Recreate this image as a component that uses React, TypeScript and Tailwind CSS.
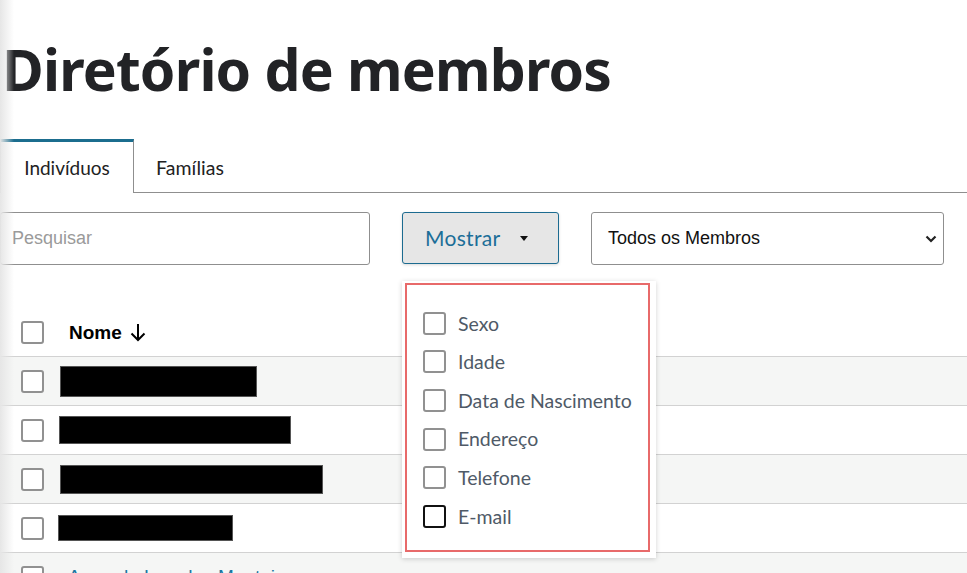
import { useState } from 'react';

const opcoes = ['Sexo', 'Idade', 'Data de Nascimento', 'Endereço', 'Telefone', 'E-mail'];

const linhas = [
  { w: 'w-[197px] h-[31px] ml-[16px]', bg: 'bg-[#f5f6f5]' },
  { w: 'w-[232px] h-[28px] ml-[15px]', bg: 'bg-white' },
  { w: 'w-[263px] h-[29px] ml-[16px]', bg: 'bg-[#f5f6f5]' },
  { w: 'w-[175px] h-[26px] ml-[14px]', bg: 'bg-white' },
];

function Caixa({ ativa = false }: { ativa?: boolean }) {
  return (
    <span
      className={
        ativa
          ? 'block w-[23px] h-[23px] shrink-0 rounded-[3px] border-2 border-[#111] bg-white'
          : 'block w-[23px] h-[23px] shrink-0 rounded-[3px] border-2 border-[#919191] bg-white'
      }
    />
  );
}

export default function App() {
  const [aba, setAba] = useState('ind');

  return (
    <div className="relative min-h-screen overflow-hidden bg-white font-['Liberation_Sans',Arial,sans-serif]">
      <div className="pointer-events-none absolute inset-y-0 left-0 z-20 w-[14px] bg-linear-to-r from-[#e6e6e6] to-transparent" />

      <h1 className="mt-[41px] pl-[2px] font-['Noto_Sans',sans-serif] text-[57px] font-bold leading-none tracking-[-0.8px] text-[#222326]">
        Diretório de membros
      </h1>

      <div className="mt-[41px] flex h-[54px] border-b border-[#8f8f8f] font-['Lato',sans-serif] text-[19px] text-[#222]">
        <button
          onClick={() => setAba('ind')}
          className={
            aba === 'ind'
              ? '-mb-px w-[134px] border-x border-t-[3px] border-[#8f8f8f] border-t-[#1b6d8e] bg-white pt-[1px]'
              : '-mb-px w-[134px] border-t-[3px] border-transparent pt-[1px]'
          }
        >
          Indivíduos
        </button>
        <button
          onClick={() => setAba('fam')}
          className={
            aba === 'fam'
              ? '-mb-px w-[112px] border-x border-t-[3px] border-[#8f8f8f] border-t-[#1b6d8e] bg-white pt-[1px] text-[19.5px]'
              : 'w-[112px] border-t-[3px] border-transparent pt-[1px] text-[19.5px]'
          }
        >
          Famílias
        </button>
      </div>

      <div className="mt-[19px] flex items-start">
        <input
          placeholder="Pesquisar"
          className="h-[53px] w-[370px] rounded-[3px] border border-[#8f8f8f] px-[11px] text-[18px] text-[#222] placeholder:text-[#9a9a9a] outline-none"
        />
        <button className="ml-[32px] flex h-[52px] w-[157px] items-center rounded-[3px] border border-[#1c6b90] bg-[#e6e6e6] pl-[22px] font-['Lato',sans-serif] text-[21px] tracking-[0.3px] text-[#1c6e98] shadow-[0_1px_3px_rgba(0,0,0,0.15)]">
          Mostrar
          <span className="ml-[20px] mt-[1px] h-0 w-0 border-x-[4px] border-t-[5px] border-x-transparent border-t-[#111]" />
        </button>
        <div className="ml-[32px] flex h-[53px] w-[353px] items-center justify-between rounded-[3px] border border-[#8f8f8f] pl-[16px] pr-[6px] text-[18px] text-[#111]">
          <span>Todos os Membros</span>
          <svg width="12" height="8" viewBox="0 0 12 8" fill="none">
            <path d="M1.5 1.5 6 6l4.5-4.5" stroke="#222" strokeWidth="2.2" />
          </svg>
        </div>
      </div>

      <div className="mt-[35px] text-[19px]">
        <div className="flex h-[57px] items-start border-b border-[#d2d2d2] pl-[21px] pt-[21px]">
          <Caixa />
          <span className="ml-[25px] flex items-center font-bold leading-[23px] text-black">
            Nome
            <svg className="ml-[8px]" width="16" height="19" viewBox="0 0 16 19" fill="none">
              <path d="M8 1v16M1.5 10.5 8 17l6.5-6.5" stroke="#000" strokeWidth="2" />
            </svg>
          </span>
        </div>
        {linhas.map((l, i) => (
          <div key={i} className={`flex h-[49px] items-center border-b border-[#d2d2d2] pl-[21px] ${l.bg}`}>
            <Caixa />
            <span className={`block border border-[#555] bg-black ${l.w}`} />
          </div>
        ))}
        <div className="flex h-[49px] items-center border-b border-[#d2d2d2] bg-[#f5f6f5] pl-[21px]">
          <Caixa />
          <span className="ml-[24px] text-[#1a76a2]">Amanda Lourdes Monteiro</span>
        </div>
      </div>

      <div className="absolute left-[402px] top-[281px] z-10 bg-white pb-[6px] pl-[3px] pr-[6px] pt-[2px] shadow-[0_1px_5px_rgba(0,0,0,0.18)]">
        <div className="flex w-[245px] flex-col border-2 border-[#e86a6a] pb-[14px] pl-[16px] pt-[19px] font-['Lato',sans-serif] text-[19.5px] text-[#4f5a67]">
          {opcoes.map((o, i) => (
            <label key={o} className="flex h-[38.6px] items-center">
              <Caixa ativa={i === opcoes.length - 1} />
              <span className="ml-[12px]">{o}</span>
            </label>
          ))}
        </div>
      </div>
    </div>
  );
}
